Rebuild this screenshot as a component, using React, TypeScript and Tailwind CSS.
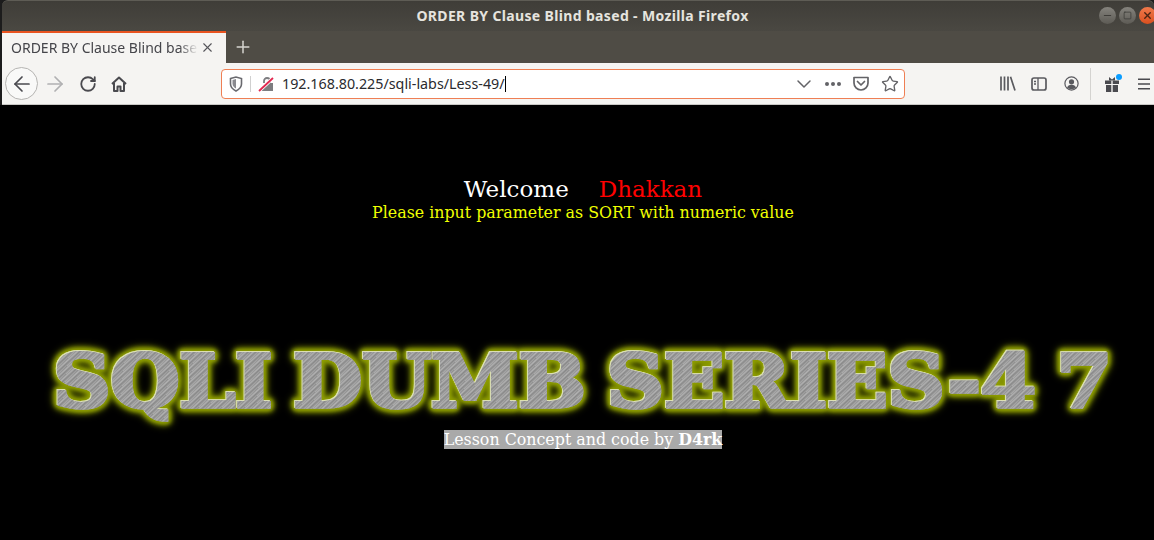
import { Plus, X, RotateCw, Minus, Square, ArrowLeft, ArrowRight, ChevronDown, Star } from "lucide-react";

const ui = "font-['Noto_Sans',sans-serif]";
const serif = "font-['DejaVu_Serif',serif]";

const Home = () => (
    <svg width="18" height="18" viewBox="0 0 18 18" fill="none" stroke="#4a4a4f" strokeWidth="2" strokeLinejoin="round">
        <path d="M2 9 9 2.500 16 9M4 8v8h3.500v-4.500h3V16H14V8" />
    </svg>
);

const Shield = () => (
    <svg width="14" height="16" viewBox="0 0 14 16" fill="none">
        <path d="M1.500 2.500 7 1l5.500 1.500V8c0 3.500-2.500 5.500-5.500 7-3-1.500-5.500-3.500-5.500-7z" stroke="#6a6a6f" strokeWidth="1.600" />
        <path d="M7 3v9.500C5 11.500 3.500 10 3.500 7.500V4z" fill="#8a8a8f" />
    </svg>
);

const BrokenLock = () => (
    <svg width="16" height="16" viewBox="0 0 16 16" fill="none">
        <path d="M6 7V5a3 3 0 0 1 6 0v2" stroke="#7d7d80" strokeWidth="1.800" />
        <path d="M3 15h12V7H11z" fill="#7d7d80" />
        <path d="M1 15 15 2" stroke="#fff" strokeWidth="3.500" />
        <path d="M1 15 15 2" stroke="#e22850" strokeWidth="1.800" />
    </svg>
);

const Pocket = () => (
    <svg width="16" height="15" viewBox="0 0 16 15" fill="none" stroke="#636367" strokeWidth="1.700" strokeLinejoin="round">
        <path d="M1 1.500h14V7a7 7 0 0 1-14 0z" />
        <path d="M4.500 5.500 8 9l3.500-3.500" strokeLinecap="round" />
    </svg>
);

const Library = () => (
    <svg width="16" height="15" viewBox="0 0 16 15" fill="none" stroke="#5a5a5f" strokeWidth="1.700">
        <path d="M1 .5v14M4.500.5v14M8 .5v14M10.500.8l4.500 13.700" />
    </svg>
);

const Sidebar = () => (
    <svg width="16" height="14" viewBox="0 0 16 14" fill="none" stroke="#5a5a5f" strokeWidth="1.700">
        <rect x="1" y="1" width="14" height="12" rx="2" />
        <path d="M7 1v12M3 4.500h2M3 7h2" strokeWidth="1.300" />
    </svg>
);

const Account = () => (
    <svg width="15" height="15" viewBox="0 0 15 15" fill="none">
        <circle cx="7.500" cy="7.500" r="6.600" stroke="#5a5a5f" strokeWidth="1.200" />
        <circle cx="7.500" cy="5.800" r="2.600" fill="#5a5a5f" />
        <path d="M3 11.500c1-2 2.500-2.700 4.500-2.700s3.500.7 4.500 2.700c-1 1-2.500 1.700-4.500 1.700S4 12.500 3 11.500z" fill="#5a5a5f" />
    </svg>
);

const Gift = () => (
    <div className="relative h-[16px] w-[14px]">
        <svg width="14" height="16" viewBox="0 0 14 16" fill="#4a4a4f">
            <path d="M4 1 7 3.500 10 1v3.500H4z" />
            <path d="M0 4.500h6.300v3.500H0zM7.700 4.500H14v3.500H7.700zM1 9h5.300v7H1zM7.700 9H13v7H7.700z" />
        </svg>
        <span className="absolute -top-[2px] -right-[3px] h-[6px] w-[6px] rounded-full bg-[#0a9dff]" />
    </div>
);

const Hamburger = () => (
    <svg width="12" height="12" viewBox="0 0 12 12" fill="#4a4a4f">
        <path d="M0 .5h12v1.600H0zM0 5.200h12v1.600H0zM0 9.900h12v1.600H0z" />
    </svg>
);

const App = () => {
    return (
        <div className="flex h-[540px] w-[1154px] flex-col overflow-hidden bg-black">
            <div className="shrink-0 bg-[#1c1c1c] pl-[2px]">
                {/* window title bar */}
                <div className={`${ui} relative flex h-[31px] items-center justify-center rounded-t-[6px] border-t border-[#5e5c55] bg-gradient-to-b from-[#3f3d38] to-[#4a4842] pb-[2px] pl-[9px] text-[14px] font-bold tracking-[0.35px] text-[#e6e4df]`}>
                    ORDER BY Clause Blind based - Mozilla Firefox
                    <div className="absolute top-[6px] -right-[2px] flex gap-[3px]">
                        <span className="flex h-[17px] w-[17px] items-center justify-center rounded-full bg-gradient-to-b from-[#85837d] to-[#5d5b55]">
                            <Minus size={11} strokeWidth={2} color="#3a3935" />
                        </span>
                        <span className="flex h-[17px] w-[17px] items-center justify-center rounded-full bg-gradient-to-b from-[#85837d] to-[#5d5b55]">
                            <Square size={9} strokeWidth={2} color="#3a3935" />
                        </span>
                        <span className="flex h-[17px] w-[17px] items-center justify-center rounded-full bg-gradient-to-b from-[#f0794a] to-[#d9501e]">
                            <X size={11} strokeWidth={3} color="#4a2413" />
                        </span>
                    </div>
                </div>

                {/* tab strip */}
                <div className={`${ui} flex h-[32px] items-stretch bg-[#4f4c45]`}>
                    <div className="flex w-[224px] items-center border-t-2 border-[#e95420] bg-[#f5f4f2] pr-[5px] pb-[2px] pl-[9px] text-[14px] text-[#45454a]">
                        <span className="w-[188px] overflow-hidden whitespace-nowrap [mask-image:linear-gradient(to_right,black_168px,transparent_187px)]">
                            ORDER BY Clause Blind based - Mozilla Firefox
                        </span>
                        <X size={15} strokeWidth={1.800} color="#55555a" className="ml-[1px]" />
                    </div>
                    <div className="flex w-[33px] items-center justify-center">
                        <Plus size={20} strokeWidth={1.800} color="#d6d4cf" />
                    </div>
                </div>

                {/* toolbar */}
                <div className={`${ui} flex h-[42px] items-center border-b border-[#c9c8c5] bg-[#f5f4f2]`}>
                    <div className="ml-[3px] flex h-[33px] w-[33px] shrink-0 items-center justify-center rounded-full border border-[#b5b4b2] bg-[#f9f9f8]">
                        <ArrowLeft size={24} strokeWidth={1.700} color="#4a4a4f" />
                    </div>
                    <ArrowRight size={24} strokeWidth={1.700} color="#b0b0b2" className="ml-[5px] shrink-0" />
                    <RotateCw size={18} strokeWidth={2.400} color="#4a4a4f" className="ml-[12px] shrink-0" />
                    <div className="ml-[13px] shrink-0"><Home /></div>
                    <div className="ml-[93px] flex h-[30px] w-[684px] shrink-0 items-center rounded-[4px] border border-[#ef7f54] bg-white">
                        <div className="flex w-[29px] justify-center border-r border-[#d0d0d0]"><Shield /></div>
                        <div className="ml-[7px]"><BrokenLock /></div>
                        <span className="ml-[8px] flex-1 text-[14.3px] text-[#2a2a2e]">
                            192.168.80.225/sqli-labs/Less-49/
                            <span className="inline-block h-[16px] w-px translate-y-[3px] bg-black" />
                        </span>
                        <ChevronDown size={24} strokeWidth={1.500} color="#636367" />
                        <span className="ml-[9px] flex gap-[2px]">
                            <i className="h-[4px] w-[4px] rounded-full bg-[#636367]" />
                            <i className="h-[4px] w-[4px] rounded-full bg-[#636367]" />
                            <i className="h-[4px] w-[4px] rounded-full bg-[#636367]" />
                        </span>
                        <div className="ml-[12px]"><Pocket /></div>
                        <Star size={18} strokeWidth={1.800} color="#636367" className="mr-[5px] ml-[12px]" />
                    </div>
                    <div className="ml-[95px] shrink-0"><Library /></div>
                    <div className="ml-[15px] shrink-0"><Sidebar /></div>
                    <div className="ml-[17px] shrink-0"><Account /></div>
                    <div className="ml-[11px] h-[32px] w-px shrink-0 bg-[#d4d3d0]" />
                    <div className="ml-[14px] shrink-0"><Gift /></div>
                    <div className="ml-[19px] shrink-0"><Hamburger /></div>
                </div>
            </div>

            {/* page */}
            <div className={`${serif} flex flex-1 flex-col items-center pl-[12px]`}>
                <div className="mt-[71px] flex text-[23px] leading-[27px] text-white">
                    <span>Welcome</span>
                    <span className="ml-[30px] text-[#ff0000]">Dhakkan</span>
                </div>
                <div className="text-[15.85px] leading-[19px] text-[#f0ff00]">
                    Please input parameter as SORT with numeric value
                </div>
                <div className="mt-[114px] w-full text-center">
                    <span className="inline-block scale-x-[1.085] bg-[repeating-linear-gradient(135deg,#909090_0px,#b2b2b2_1.500px,#888888_3px,#aaaaaa_5px),repeating-linear-gradient(45deg,#909090_0px,#a6a6a6_7px)] bg-clip-text text-[73px] leading-[90px] font-bold whitespace-nowrap text-transparent [-webkit-text-stroke:3.500px_transparent] [word-spacing:-6px] [filter:drop-shadow(-1px_-1px_0_rgba(255,255,255,0.7))_drop-shadow(0_0_2px_#8f9e00)_drop-shadow(0_0_2px_#8f9e00)_drop-shadow(0_0_2px_#859400)_drop-shadow(0_0_3px_#6a7700)]">
                        SQLI DUMB SERIES-4 7
                    </span>
                </div>
                <div className="mt-[4px] bg-[#a9a9a9] text-[15.85px] leading-[19px] text-white">
                    Lesson Concept and code by <b>D4rk</b>
                </div>
            </div>
        </div>
    );
};

export default App;
